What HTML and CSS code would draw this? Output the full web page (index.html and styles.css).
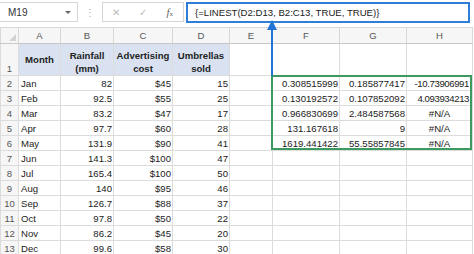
FILE: index.html
```html
<!DOCTYPE html>
<html lang="en">
<head>
  <meta charset="utf-8">
  <title>LINEST example</title>
  <link rel="stylesheet" href="styles.css">
</head>
<body>
  <div class="sheet">
    <div class="formula-bar">
      <div class="name-box">
        <span>M19</span>
        <span class="caret"></span>
      </div>
      <div class="grip">&#8942;</div>
      <div class="fx-buttons">
        <span class="btn-x">&#10005;</span>
        <span class="btn-ok">&#10003;</span>
        <span class="btn-fx"><i>f</i><small>x</small></span>
      </div>
      <div class="formula-input">{=LINEST(D2:D13, B2:C13, TRUE, TRUE)}</div>
    </div>

    <table class="grid">
      <colgroup>
        <col class="c-rh"><col class="c-a"><col class="c-b"><col class="c-c"><col class="c-d">
        <col class="c-e"><col class="c-f"><col class="c-g"><col class="c-h">
      </colgroup>
      <thead>
        <tr class="col-heads">
          <th class="corner"><span class="corner-tri"></span></th>
          <th>A</th><th>B</th><th>C</th><th>D</th><th>E</th><th>F</th><th>G</th><th>H</th>
        </tr>
      </thead>
      <tbody>
        <tr class="title-row">
          <th class="rn">1</th>
          <td class="hd mid">Month</td>
          <td class="hd">Rainfall<br>(mm)</td>
          <td class="hd">Advertising<br>cost</td>
          <td class="hd">Umbrellas<br>sold</td>
          <td></td><td></td><td></td><td></td>
        </tr>
        <tr><th class="rn">2</th><td>Jan</td><td class="num">82</td><td class="num">$45</td><td class="num">15</td><td></td><td class="num">0.308515999</td><td class="num">0.185877417</td><td class="num tight">-10.73906991</td></tr>
        <tr><th class="rn">3</th><td>Feb</td><td class="num">92.5</td><td class="num">$55</td><td class="num">25</td><td></td><td class="num">0.130192572</td><td class="num">0.107852092</td><td class="num tight">4.093934213</td></tr>
        <tr><th class="rn">4</th><td>Mar</td><td class="num">83.2</td><td class="num">$47</td><td class="num">17</td><td></td><td class="num">0.966830699</td><td class="num">2.484587568</td><td class="na">#N/A</td></tr>
        <tr><th class="rn">5</th><td>Apr</td><td class="num">97.7</td><td class="num">$60</td><td class="num">28</td><td></td><td class="num">131.167618</td><td class="num">9</td><td class="na">#N/A</td></tr>
        <tr><th class="rn">6</th><td>May</td><td class="num">131.9</td><td class="num">$90</td><td class="num">41</td><td></td><td class="num">1619.441422</td><td class="num">55.55857845</td><td class="na">#N/A</td></tr>
        <tr><th class="rn">7</th><td>Jun</td><td class="num">141.3</td><td class="num">$100</td><td class="num">47</td><td></td><td></td><td></td><td></td></tr>
        <tr><th class="rn">8</th><td>Jul</td><td class="num">165.4</td><td class="num">$100</td><td class="num">50</td><td></td><td></td><td></td><td></td></tr>
        <tr><th class="rn">9</th><td>Aug</td><td class="num">140</td><td class="num">$95</td><td class="num">46</td><td></td><td></td><td></td><td></td></tr>
        <tr><th class="rn">10</th><td>Sep</td><td class="num">126.7</td><td class="num">$88</td><td class="num">37</td><td></td><td></td><td></td><td></td></tr>
        <tr><th class="rn">11</th><td>Oct</td><td class="num">97.8</td><td class="num">$50</td><td class="num">22</td><td></td><td></td><td></td><td></td></tr>
        <tr><th class="rn">12</th><td>Nov</td><td class="num">86.2</td><td class="num">$45</td><td class="num">20</td><td></td><td></td><td></td><td></td></tr>
        <tr><th class="rn">13</th><td>Dec</td><td class="num">99.6</td><td class="num">$58</td><td class="num">30</td><td></td><td></td><td></td><td></td></tr>
      </tbody>
    </table>

    <div class="result-box"></div>
    <svg class="pointer" width="12" height="56" viewBox="0 0 12 56">
      <path d="M6 0 L11 10 L1 10 Z" fill="#1f74d4"/>
      <line x1="6" y1="8" x2="6" y2="56" stroke="#1f74d4" stroke-width="2"/>
    </svg>
  </div>
</body>
</html>
```

FILE: styles.css
```css
html, body {
  margin: 0;
  padding: 0;
  background: #fff;
  font-family: "Liberation Sans", Arial, sans-serif;
  color: #222;
}

.sheet {
  position: relative;
  width: 474px;
  height: 254px;
  overflow: hidden;
}

/* formula bar */
.formula-bar {
  display: flex;
  align-items: center;
  height: 24px;
  font-size: 10px;
}
.name-box {
  display: flex;
  align-items: center;
  justify-content: space-between;
  box-sizing: border-box;
  width: 78px;
  height: 20px;
  padding: 0 6px 0 8px;
  border: 1px solid #d6d6d6;
  border-left: none;
  color: #333;
  font-size: 10px;
}
.caret {
  width: 0;
  height: 0;
  border-left: 3px solid transparent;
  border-right: 3px solid transparent;
  border-top: 3px solid #666;
}
.grip {
  width: 24px;
  text-align: center;
  color: #aaa;
  font-size: 10px;
}
.fx-buttons {
  display: flex;
  align-items: center;
  box-sizing: border-box;
  width: 82px;
  height: 20px;
  border: 1px solid #d6d6d6;
  color: #bbb;
  font-size: 10px;
}
.fx-buttons span {
  flex: 1;
  text-align: center;
}
.btn-fx {
  color: #666;
  font-family: "Liberation Serif", serif;
  font-size: 11px;
}
.btn-fx small {
  font-size: 7px;
}
.formula-input {
  box-sizing: border-box;
  width: 284px;
  height: 21px;
  margin-left: 2px;
  padding: 3px 0 0 7px;
  border: 2px solid #2f7fd8;
  color: #222;
  font-size: 9.6px;
  white-space: nowrap;
}

/* grid */
.grid {
  margin-top: 3px;
  border-collapse: collapse;
  table-layout: fixed;
  width: 472px;
  font-size: 9.6px;
}
.c-rh { width: 18px; }
.c-a { width: 42px; }
.c-b { width: 53px; }
.c-c { width: 59px; }
.c-d { width: 57px; }
.c-e { width: 43px; }
.c-f { width: 67px; }
.c-g { width: 67px; }
.c-h { width: 66px; }

.grid th,
.grid td {
  height: 14px;
  padding: 0 2px;
  border: 1px solid #dcdcdc;
  overflow: hidden;
  white-space: nowrap;
  line-height: 13px;
}
.col-heads th {
  height: 15px;
  background: #f6f6f6;
  color: #555;
  font-weight: normal;
  font-size: 9.5px;
  border-color: #d8d8d8;
  border-bottom-color: #c8c8c8;
}
.corner {
  position: relative;
}
.corner-tri {
  position: absolute;
  right: 2px;
  bottom: 2px;
  width: 0;
  height: 0;
  border-left: 7px solid transparent;
  border-bottom: 7px solid #d3d3d3;
}
.rn {
  background: #f6f6f6;
  color: #555;
  font-weight: normal;
  font-size: 9.5px;
  text-align: center;
  vertical-align: bottom;
}
.grid .rn {
  padding: 0;
}
.title-row td,
.title-row th {
  height: 31px;
}
.hd {
  background: #dae2f2;
  font-weight: bold;
  text-align: center;
  vertical-align: bottom;
  line-height: 14px;
  color: #222;
}
.hd.mid {
  vertical-align: middle;
}
.grid .num {
  text-align: right;
  padding: 0 1px 0 0;
}
.grid .tight {
  padding-right: 3px;
  letter-spacing: -0.4px;
}
.na {
  text-align: center;
}

/* overlays */
.result-box {
  position: absolute;
  left: 271px;
  top: 75px;
  width: 197px;
  height: 71px;
  border: 2px solid #3c9a60;
}
.pointer {
  position: absolute;
  left: 266px;
  top: 20px;
}
```
